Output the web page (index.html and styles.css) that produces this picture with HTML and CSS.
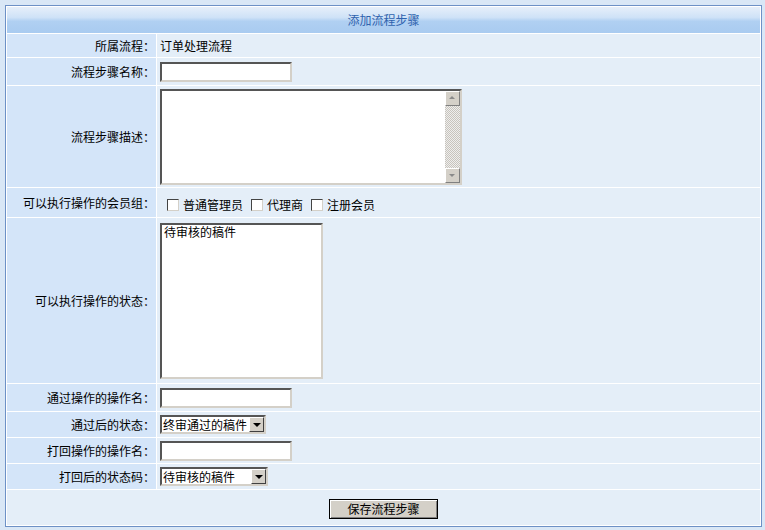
FILE: index.html
```html
<!DOCTYPE html>
<html lang="zh-CN">
<head>
<meta charset="utf-8">
<title>添加流程步骤</title>
<link rel="stylesheet" href="styles.css">
</head>
<body>
<table class="tabla">
    <colgroup>
        <col class="col-etiqueta">
        <col>
    </colgroup>
    <tr class="fila-titulo">
        <th colspan="2">添加流程步骤</th>
    </tr>
    <tr class="h23">
        <td class="etiqueta">所属流程：</td>
        <td class="valor">订单处理流程</td>
    </tr>
    <tr class="h27">
        <td class="etiqueta">流程步骤名称：</td>
        <td class="valor"><span class="caja-texto"></span></td>
    </tr>
    <tr class="h101">
        <td class="etiqueta">流程步骤描述：</td>
        <td class="valor">
            <div class="area">
                <div class="area-texto"></div>
                <div class="barra">
                    <div class="flecha arriba"></div>
                    <div class="pista"></div>
                    <div class="flecha abajo"></div>
                </div>
            </div>
        </td>
    </tr>
    <tr class="h29">
        <td class="etiqueta">可以执行操作的会员组：</td>
        <td class="valor">
            <div class="grupo">
                <span class="check"></span><span class="opcion">普通管理员</span>
                <span class="check"></span><span class="opcion">代理商</span>
                <span class="check"></span><span class="opcion">注册会员</span>
            </div>
        </td>
    </tr>
    <tr class="h165">
        <td class="etiqueta">可以执行操作的状态：</td>
        <td class="valor">
            <div class="lista">
                <div class="item">待审核的稿件</div>
            </div>
        </td>
    </tr>
    <tr class="h27">
        <td class="etiqueta">通过操作的操作名：</td>
        <td class="valor"><span class="caja-texto"></span></td>
    </tr>
    <tr class="h25">
        <td class="etiqueta">通过后的状态：</td>
        <td class="valor">
            <div class="selector ancho1">
                <span class="sel-texto">终审通过的稿件</span>
                <span class="sel-boton"></span>
            </div>
        </td>
    </tr>
    <tr class="h25">
        <td class="etiqueta">打回操作的操作名：</td>
        <td class="valor"><span class="caja-texto"></span></td>
    </tr>
    <tr class="h25">
        <td class="etiqueta">打回后的状态码：</td>
        <td class="valor">
            <div class="selector ancho2">
                <span class="sel-texto">待审核的稿件</span>
                <span class="sel-boton"></span>
            </div>
        </td>
    </tr>
    <tr class="h35">
        <td class="valor centro" colspan="2"><span class="boton">保存流程步骤</span></td>
    </tr>
</table>
</body>
</html>
```

FILE: styles.css
```css
body {
    margin: 0;
    padding: 5px;
    background: #d9e7f6;
    font-family: "Noto Sans CJK SC", "Noto Sans", sans-serif;
    font-size: 12px;
    color: #000;
}

.tabla {
    width: 757px;
    table-layout: fixed;
    border: 1px solid #6d91c6;
    border-spacing: 1px;
    background: #fff;
}

.col-etiqueta {
    width: 149px;
}

.tabla td, .tabla th {
    box-sizing: border-box;
    padding: 0;
    font-weight: normal;
    line-height: 14px;
}

.fila-titulo th {
    height: 26px;
    color: #2f63ae;
    text-align: center;
    background: linear-gradient(#e6effa, #cfe2f7 40%, #b0d0f2 55%, #a9cbf0);
}

.h23 td { height: 23px; }
.h25 td { height: 25px; }
.h27 td { height: 27px; }
.h29 td { height: 29px; }
.h35 td { height: 35px; }
.h101 td { height: 101px; }
.h165 td { height: 165px; }

.etiqueta {
    text-align: right;
    padding-right: 1px !important;
    background: #d4e5f9;
    white-space: nowrap;
}

.valor {
    padding-left: 3px !important;
    background: #e4eef8;
}

.centro {
    text-align: center;
    padding-left: 0 !important;
}

.caja-texto {
    display: block;
    box-sizing: border-box;
    width: 132px;
    height: 20px;
    background: #fff;
    border: 2px solid;
    border-color: #555 #d4d0c8 #d4d0c8 #555;
}

.area {
    display: flex;
    box-sizing: border-box;
    width: 302px;
    height: 96px;
    background: #fff;
    border: 2px solid;
    border-color: #555 #d4d0c8 #d4d0c8 #555;
}

.area-texto {
    flex: 1;
}

.barra {
    width: 15px;
    display: flex;
    flex-direction: column;
}

.pista {
    flex: 1;
    background: repeating-conic-gradient(#c8c4bc 0 25%, #eeeeee 0 50%) 0 0 / 2px 2px;
}

.flecha {
    position: relative;
    height: 15px;
    box-sizing: border-box;
    background: #d4d0c8;
    border: 1px solid;
    border-color: #fff #808080 #808080 #fff;
}

.flecha::after {
    content: "";
    position: absolute;
    left: 3px;
    top: 4px;
    border-left: 3px solid transparent;
    border-right: 3px solid transparent;
}

.arriba::after {
    border-bottom: 3px solid #8a8a8a;
}

.abajo::after {
    top: 5px;
    border-top: 3px solid #8a8a8a;
}

.grupo {
    display: flex;
    align-items: center;
    padding-top: 4px;
}

.check {
    box-sizing: border-box;
    width: 12px;
    height: 12px;
    margin-left: 8px;
    margin-right: 4px;
    background: #fff;
    border: 1px solid;
    border-color: #444 #d4d0c8 #d4d0c8 #444;
}

.check:first-child {
    margin-left: 7px;
}

.lista {
    box-sizing: border-box;
    width: 163px;
    height: 156px;
    background: #fff;
    border: 2px solid;
    border-color: #555 #d4d0c8 #d4d0c8 #555;
}

.item {
    padding: 0 0 0 2px;
}

.selector {
    display: flex;
    align-items: center;
    box-sizing: border-box;
    height: 19px;
    background: #fff;
    border: 2px solid;
    border-color: #555 #d4d0c8 #d4d0c8 #555;
}

.ancho1 { width: 106px; }
.ancho2 { width: 108px; }

.sel-texto {
    flex: 1;
    padding-left: 1px;
    white-space: nowrap;
}

.sel-boton {
    position: relative;
    flex: none;
    width: 15px;
    height: 15px;
    box-sizing: border-box;
    background: #d4d0c8;
    border: 1px solid;
    border-color: #fff #404040 #404040 #fff;
}

.sel-boton::after {
    content: "";
    position: absolute;
    left: 3px;
    top: 5px;
    border-left: 4px solid transparent;
    border-right: 4px solid transparent;
    border-top: 4px solid #000;
}

.boton {
    display: inline-block;
    box-sizing: border-box;
    width: 109px;
    height: 20px;
    margin-top: 3px;
    line-height: 17px;
    font-size: 12px;
    background: #d4d0c8;
    border: 1px solid #000;
    box-shadow: inset 1px 1px #fff, inset -1px -1px #808080;
}
```
